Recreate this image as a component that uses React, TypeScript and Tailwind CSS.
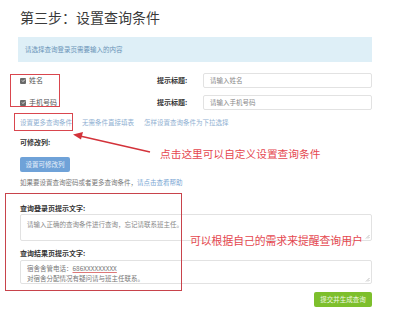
// Step 3 of the query builder: choose query fields + prompt texts, with red annotations on top

const font = { fontFamily: '"Noto Sans CJK SC", "Noto Sans", sans-serif' };

function Check() {
  return (
    <span className="inline-flex items-center justify-center w-[6px] h-[6px] rounded-[1px] bg-[#6a6a6a]">
      <svg width="5" height="5" viewBox="0 0 10 10">
        <path d="M2 5l2 2 4-4" stroke="#fff" strokeWidth="1.6" fill="none" />
      </svg>
    </span>
  );
}

function FieldRow({ name, placeholder }: { name: string; placeholder: string }) {
  return (
    <div className="flex items-center h-[15px]">
      <div className="w-[137px] flex items-center gap-[3px] text-[7px] text-[#555]">
        <Check />
        <span>{name}</span>
      </div>
      <div className="w-[46px] text-[7px] font-bold text-[#333]">提示标题:</div>
      <div className="flex-1 h-full border border-[#e2e2e2] rounded-[2px] flex items-center px-[6px] text-[6.5px] text-[#888]">
        {placeholder}
      </div>
    </div>
  );
}

function Grip() {
  return (
    <svg className="absolute right-[1px] bottom-[1px]" width="5" height="5" viewBox="0 0 5 5">
      <path d="M4.5 1L1 4.5M4.5 3L3 4.5" stroke="#999" strokeWidth="0.6" />
    </svg>
  );
}

export default function App() {
  return (
    <div className="relative w-[396px] h-[331px] overflow-hidden bg-white" style={font}>
      <div className="flex flex-col pl-[20px] w-[372px]">
        <h1 className="mt-[7px] leading-[20px] text-[14px] text-[#3a3a3a]">第三步：设置查询条件</h1>

        <div className="mt-[10px] -ml-[2px] h-[25px] bg-[#deeff7] flex items-center pl-[7px] text-[6.5px] text-[#6a94b8]">
          请选择查询登录页需要输入的内容
        </div>

        <div className="mt-[11px] flex flex-col gap-[7px]">
          <FieldRow name="姓名" placeholder="请输入姓名" />
          <FieldRow name="手机号码" placeholder="请输入手机号码" />
        </div>

        <div className="mt-[8px] h-[10px] flex items-center text-[6.5px] text-[#8fb0d2]">
          <span className="w-[62px]">设置更多查询条件</span>
          <span className="w-[62px]">无需条件直接填表</span>
          <span>怎样设置查询条件为下拉选择</span>
        </div>

        <div className="mt-[9px] h-[10px] flex items-center text-[7px] font-bold text-[#333]">可修改列:</div>

        <div className="mt-[10px] w-[50px] h-[15px] rounded-[2px] bg-[#6fa2d8] flex items-center justify-center text-[6.5px] text-[#e8f1fb]">
          设置可修改列
        </div>

        <div className="mt-[6px] h-[10px] flex items-center text-[6.5px] text-[#777]">
          如果要设置查询密码或者更多查询条件，<span className="text-[#79a6d3]">请点击查看帮助</span>
        </div>

        <div className="mt-[15px] h-[10px] flex items-center text-[7px] font-bold text-[#333]">查询登录页提示文字:</div>
        <div className="relative mt-[1px] h-[27px] border border-[#e2e2e2] rounded-[2px] px-[6px] pt-[5px] text-[6.5px] text-[#888]">
          请输入正确的查询条件进行查询，忘记请联系班主任。
          <Grip />
        </div>

        <div className="mt-[7px] h-[10px] flex items-center text-[7px] font-bold text-[#333]">查询结果页提示文字:</div>
        <div className="relative mt-[2px] h-[24px] border border-[#e2e2e2] rounded-[2px] px-[6px] pt-[2px] text-[6.5px] leading-[10px] text-[#777]">
          <div>
            宿舍舍管电话：<span className="underline decoration-[#d77]">686XXXXXXXXX</span>
          </div>
          <div>对宿舍分配情况有疑问请与班主任联系。</div>
          <Grip />
        </div>

        <div className="mt-[8px] self-end w-[58px] h-[15px] rounded-[2px] bg-[#7dbf2c] flex items-center justify-center text-[6.5px] text-[#eef8e0]">
          提交并生成查询
        </div>
      </div>

      {/* annotations drawn over the form */}
      <div className="absolute left-[10px] top-[74px] w-[50px] h-[33px] border border-[#d9464e]" />
      <div className="absolute left-[14px] top-[113px] w-[59px] h-[18px] border border-[#d9464e]" />
      <div className="absolute left-[5px] top-[193px] w-[177px] h-[98px] border border-[#c8434b]" />

      <svg className="absolute left-0 top-0" width="396" height="331" viewBox="0 0 396 331">
        <line x1="150" y1="152" x2="80" y2="136" stroke="#d3323a" strokeWidth="1.6" />
        <path d="M73 134.5 L83 132 L81 139.5 Z" fill="#d3323a" />
      </svg>

      <div className="absolute left-[160px] top-[147px] text-[10.7px] leading-[14px] text-[#e5474f]">
        点击这里可以自定义设置查询条件
      </div>
      <div className="absolute left-[190px] top-[233px] text-[10.8px] leading-[14px] text-[#e5474f]">
        可以根据自己的需求来提醒查询用户
      </div>
    </div>
  );
}
